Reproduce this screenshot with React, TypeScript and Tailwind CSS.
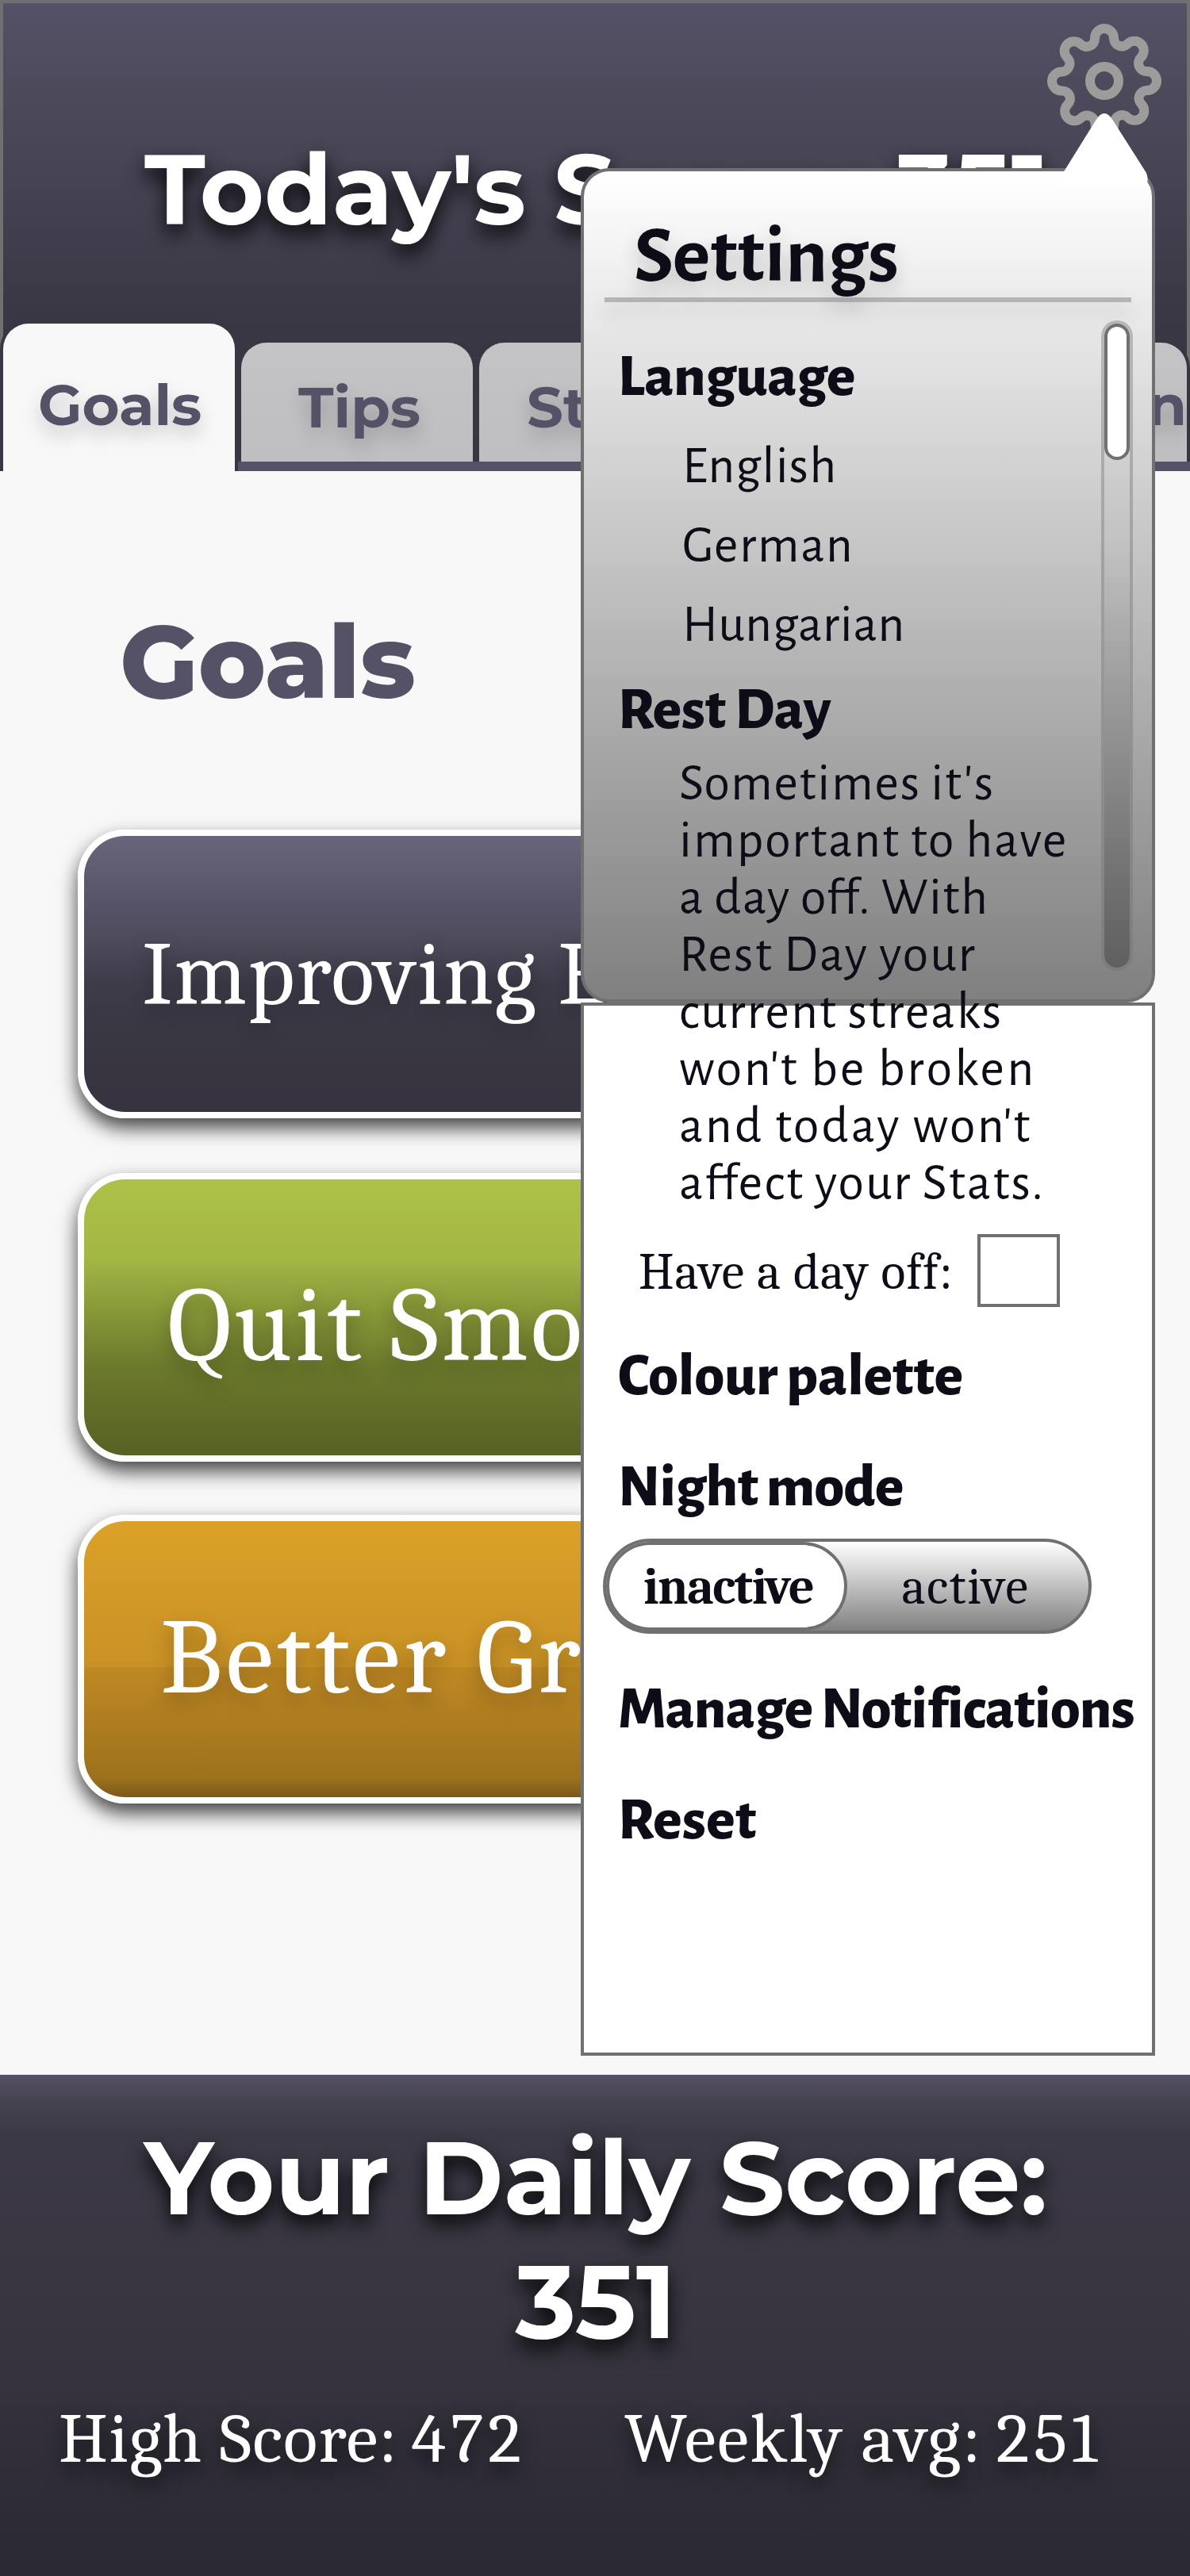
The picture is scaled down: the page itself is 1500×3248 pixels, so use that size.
import React from 'react';

const display = "font-['Montserrat','Inter',sans-serif]";
const serif = "font-['Caladea','Liberation_Serif',serif] font-normal";
const humanist = "font-['Alegreya_Sans','Open_Sans',sans-serif]";

const heading = `${humanist} text-[76px] leading-[80px] font-extrabold whitespace-nowrap ml-[47px]`;
const option = `${humanist} text-[66px] leading-[80px] whitespace-nowrap`;

const tabs = [
  { label: 'Tips', pad: 'pl-[72px] pt-[41px]' },
  { label: 'Stats', pad: 'pl-[60px] pt-[41px]' },
  { label: 'Log', pad: 'pl-[60px] pt-[41px]' },
  { label: 'Plan', pad: 'justify-end pt-[38px]' },
];

const cards = [
  {
    label: 'Improving Eyesight',
    box: 'mt-[130px] pl-[73px] pt-[105px] bg-[linear-gradient(180deg,#68657c_0%,#565368_26%,#4b4857_40%,#3e3b49_54%,#393741_75%,#36323f_100%)]',
    text: 'text-[113px] leading-[140px] tracking-[1.5px]',
  },
  {
    label: 'Quit Smoking',
    box: 'mt-[69px] pl-[105px] pt-[104px] bg-[linear-gradient(180deg,#adc247_0%,#a3b744_28%,#6b792c_68%,#586124_100%)]',
    text: 'text-[135px] leading-[160px] tracking-[3.08px]',
  },
  {
    label: 'Better Grades',
    box: 'mt-[67px] pl-[96px] pt-[92px] bg-[linear-gradient(180deg,#dba128_0%,#c99125_53%,#bf8923_53%,#9d711d_93%,#7a5818_100%)]',
    text: 'text-[135px] leading-[160px] tracking-[4.54px]',
  },
];

const restDayLines = [
  { text: "Sometimes it's", spacing: 'tracking-[1.7px]' },
  { text: 'important to have', spacing: 'tracking-[1.95px]' },
  { text: 'a day off. With', spacing: 'tracking-[1.45px]' },
  { text: 'Rest Day your', spacing: 'tracking-[2.2px]' },
  { text: 'current streaks', spacing: 'tracking-[1.9px]' },
  { text: "won't be broken", spacing: 'tracking-[3.2px]' },
  { text: "and today won't", spacing: 'tracking-[3px]' },
  { text: 'affect your Stats.', spacing: 'tracking-[2.1px]' },
];

function GearIcon() {
  return (
    <svg
      className="absolute left-[1320px] top-[30px] size-[144px] text-[#9d9c9a]"
      viewBox="0 0 24 24"
      fill="none"
      stroke="currentColor"
      strokeWidth="2"
      strokeLinecap="round"
      strokeLinejoin="round"
    >
      <circle cx="12" cy="12" r="3" />
      <path d="M19.4 15a1.65 1.65 0 0 0 .33 1.82l.06.06a2 2 0 0 1 0 2.83 2 2 0 0 1-2.83 0l-.06-.06a1.65 1.65 0 0 0-1.82-.33 1.65 1.65 0 0 0-1 1.51V21a2 2 0 0 1-2 2 2 2 0 0 1-2-2v-.09A1.65 1.65 0 0 0 9 19.4a1.65 1.65 0 0 0-1.82.33l-.06.06a2 2 0 0 1-2.83 0 2 2 0 0 1 0-2.83l.06-.06a1.65 1.65 0 0 0 .33-1.82 1.65 1.65 0 0 0-1.51-1H3a2 2 0 0 1-2-2 2 2 0 0 1 2-2h.09A1.65 1.65 0 0 0 4.6 9a1.65 1.65 0 0 0-.33-1.82l-.06-.06a2 2 0 0 1 0-2.83 2 2 0 0 1 2.83 0l.06.06a1.65 1.65 0 0 0 1.82.33H9a1.65 1.65 0 0 0 1-1.51V3a2 2 0 0 1 2-2 2 2 0 0 1 2 2v.09a1.65 1.65 0 0 0 1 1.51 1.65 1.65 0 0 0 1.82-.33l.06-.06a2 2 0 0 1 2.83 0 2 2 0 0 1 0 2.83l-.06.06a1.65 1.65 0 0 0-.33 1.82V9a1.65 1.65 0 0 0 1.51 1H21a2 2 0 0 1 2 2 2 2 0 0 1-2 2h-.09a1.65 1.65 0 0 0-1.51 1z" />
    </svg>
  );
}

function Header() {
  return (
    <header className="flex h-[594px] flex-col justify-between border-4 border-b-0 border-[#707070] bg-[linear-gradient(180deg,#555166_0%,#474454_34%,#3b3845_66%,#36323f_100%)]">
      <h1
        className={`${display} mt-[160px] ml-[178px] text-[124px] leading-[150px] font-bold whitespace-nowrap text-white [text-shadow:0_12px_24px_rgba(0,0,0,0.9)]`}
      >
        Today's Score: 351
      </h1>
      <nav
        className={`${display} -mx-1 flex items-end text-[72px] leading-[80px] font-bold text-[#555166] [text-shadow:0_12px_24px_rgba(0,0,0,0.2)]`}
      >
        <div className="h-[190px] w-[300px] shrink-0 rounded-t-[36px] border-4 border-b-0 border-[#3a3744] bg-[#f8f8f8] pt-[62px] pl-[44px]">
          Goals
        </div>
        <div className="flex grow border-b-12 border-[#555166]">
          {tabs.map((tab) => (
            <div
              key={tab.label}
              className={`flex h-[154px] w-[300px] rounded-t-[36px] border-4 border-b-0 border-[#393641] bg-[linear-gradient(180deg,#c4c4c7,#bfbfc2)] ${tab.pad}`}
            >
              {tab.label}
            </div>
          ))}
        </div>
      </nav>
    </header>
  );
}

function Goals() {
  return (
    <main className="h-[2022px] pt-[160px]">
      <h2
        className={`${display} ml-[151px] text-[128.5px] leading-[160px] font-extrabold tracking-[-0.3px] text-[#555166]`}
      >
        Goals
      </h2>
      <div className="pt-[2px]">
        {cards.map((card) => (
          <div
            key={card.label}
            className={`ml-[98px] h-[364px] w-[1304px] rounded-[60px] border-8 border-white bg-origin-padding shadow-[0_12px_24px_rgba(0,0,0,0.73)] ${card.box}`}
          >
            <div
              className={`${serif} ${card.text} whitespace-nowrap text-white [text-shadow:0_12px_24px_rgba(0,0,0,0.25)]`}
            >
              {card.label}
            </div>
          </div>
        ))}
      </div>
    </main>
  );
}

function Footer() {
  return (
    <footer className="h-[632px] bg-[linear-gradient(180deg,#555166_0%,#464351_5%,#3d3a47_11%,#383540_48%,#35323d_62%,#2a2832_100%)] pt-[52px] text-white">
      <h2
        className={`${display} pl-[2px] text-center text-[129.5px] leading-[156px] font-bold [text-shadow:0_12px_24px_rgba(0,0,0,0.9)]`}
      >
        Your Daily Score:
        <br />
        351
      </h2>
      <div
        className={`${serif} mt-[45px] flex pl-[74px] text-[89px] leading-[100px] whitespace-nowrap [text-shadow:0_12px_24px_rgba(0,0,0,0.7)]`}
      >
        <div className="w-[713px] tracking-[1.4px]">
          High Score: <span className="-ml-[4px] tracking-[5.5px]">472</span>
        </div>
        <div className="tracking-[2.1px]">
          Weekly avg: <span className="-ml-[4px] tracking-[5.5px]">251</span>
        </div>
      </div>
    </footer>
  );
}

function Settings() {
  return (
    <aside className="absolute top-[212px] left-[732px] w-[724px] text-[#0e0c16]">
      <div className="h-[1052px] rounded-[36px] border-4 border-[#707070] bg-[linear-gradient(180deg,#ffffff,#808080)]" />
      <div className="h-[1328px] border-4 border-[#707070] bg-white" />

      <svg
        className="absolute -top-[72px] left-[604px] h-[100px] w-[114px]"
        viewBox="0 0 114 100"
        fill="#ffffff"
      >
        <path d="M45 12Q56 -6 67 12L109 78Q114 92 104 96L10 96Q-2 92 4 78Z" />
      </svg>

      <div className="absolute inset-0 flex flex-col items-start pt-[57px]">
        <h2
          className={`${humanist} ml-[67px] text-[101px] leading-[110px] font-bold [text-shadow:0_12px_24px_rgba(0,0,0,0.18)]`}
        >
          Settings
        </h2>
        <div className="-mt-1 ml-[30px] h-[6px] w-[664px] bg-[#707070]/45 shadow-[0_12px_24px_rgba(0,0,0,0.18)]" />

        <h3 className={`${heading} mt-[54px] tracking-[-0.3px]`}>Language</h3>
        <ul className={`${option} mt-[33px] ml-[128px] flex flex-col gap-5`}>
          <li className="tracking-[1px]">English</li>
          <li className="tracking-[1.6px]">German</li>
          <li className="tracking-[0.8px]">Hungarian</li>
        </ul>

        <h3 className={`${heading} mt-[27px]`}>Rest Day</h3>
        <p
          className={`${humanist} mt-[17px] ml-[124px] text-[66px] leading-[72px] whitespace-nowrap [font-feature-settings:'liga'_1]`}
        >
          {restDayLines.map((line) => (
            <span key={line.text} className={`block ${line.spacing}`}>
              {line.text}
            </span>
          ))}
        </p>
        <label className={`${serif} mt-[28px] ml-[73px] flex items-center text-[64px] leading-[80px]`}>
          <span className="w-[427px] pt-[3px] tracking-[0.9px] whitespace-nowrap">Have a day off:</span>
          <span className="h-[92px] w-[104px] border-4 border-[#707070] bg-white" />
        </label>

        <h3 className={`${heading} mt-[47px]`}>Colour palette</h3>
        <h3 className={`${heading} mt-[60px] tracking-[-0.7px]`}>Night mode</h3>
        <div className="mt-[25px] ml-[28px] flex h-[120px] w-[616px] rounded-full border-4 border-[#707070] bg-[linear-gradient(180deg,#ffffff,#808080)] font-['Caladea','Liberation_Serif',serif] text-[64px] leading-[80px]">
          <div className="flex w-[304px] items-center justify-center rounded-full border-4 border-[#707070] bg-white pt-[2px] pl-[4px] font-bold tracking-[-1.5px]">
            inactive
          </div>
          <div className="flex grow items-center justify-center pt-[2px] pr-[6px] tracking-[1.6px]">active</div>
        </div>

        <h3 className={`${heading} mt-[55px] tracking-[-0.65px]`}>Manage Notifications</h3>
        <h3 className={`${heading} mt-[60px] tracking-[0.5px]`}>Reset</h3>
      </div>

      <div className="absolute top-[192px] left-[656px] h-[820px] w-10 rounded-full border-4 border-[#707070]/40 bg-[linear-gradient(180deg,rgba(0,0,0,0)_0%,rgba(0,0,0,0.02)_35%,rgba(0,0,0,0.28)_100%)] bg-clip-padding">
        <div className="h-[172px] rounded-full border-4 border-[#707070] bg-white" />
      </div>
    </aside>
  );
}

export default function App() {
  return (
    <div className="relative h-[3248px] w-[1500px] overflow-hidden bg-[#f8f8f8]">
      <Header />
      <Goals />
      <Footer />
      <GearIcon />
      <Settings />
    </div>
  );
}
